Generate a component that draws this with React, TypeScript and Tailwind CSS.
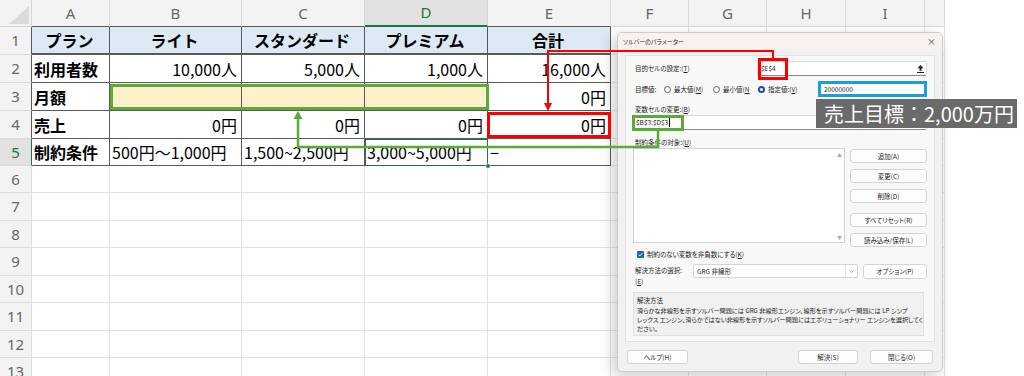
import clsx from "clsx";

const cols = [
  { name: "A", w: "w-[78px]" },
  { name: "B", w: "w-[132px]" },
  { name: "C", w: "w-[123px]" },
  { name: "D", w: "w-[123px]" },
  { name: "E", w: "w-[123px]" },
  { name: "F", w: "w-[78px]" },
  { name: "G", w: "w-[78px]" },
  { name: "H", w: "w-[79px]" },
  { name: "I", w: "w-[79px]" },
  { name: "", w: "w-[20px]" },
];

const rowHeights = [
  "h-[28px]", "h-[28px]", "h-[28px]", "h-[28px]", "h-[27px]", "h-[27px]", "h-[28px]",
  "h-[27px]", "h-[28px]", "h-[27px]", "h-[28px]", "h-[27px]", "h-[28px]",
];

type Cell = { text?: string; align?: "l" | "c" | "r"; bold?: boolean; yellow?: boolean };

const table: Cell[][] = [
  [
    { text: "プラン", align: "c", bold: true },
    { text: "ライト", align: "c", bold: true },
    { text: "スタンダード", align: "c", bold: true },
    { text: "プレミアム", align: "c", bold: true },
    { text: "合計", align: "c", bold: true },
  ],
  [
    { text: "利用者数", bold: true },
    { text: "10,000人", align: "r" },
    { text: "5,000人", align: "r" },
    { text: "1,000人", align: "r" },
    { text: "16,000人", align: "r" },
  ],
  [
    { text: "月額", bold: true },
    { yellow: true },
    { yellow: true },
    { yellow: true },
    { text: "0円", align: "r" },
  ],
  [
    { text: "売上", bold: true },
    { text: "0円", align: "r" },
    { text: "0円", align: "r" },
    { text: "0円", align: "r" },
    { text: "0円", align: "r" },
  ],
  [
    { text: "制約条件", bold: true },
    { text: "500円～1,000円" },
    { text: "1,500~2,500円" },
    { text: "3,000~5,000円" },
    { text: "−" },
  ],
];

function Sheet() {
  return (
    <div className="w-[945px] bg-white [font-family:'Noto_Sans_CJK_JP',sans-serif] text-black">
      {/* column headers */}
      <div className="flex h-[27px]">
        <div className="w-[32px] shrink-0 bg-[#f3f3f3] border-r border-b border-[#d4d4d4] flex items-end justify-end p-[2px]">
          <svg width="20" height="18" viewBox="0 0 20 18">
            <polygon points="0,18 20,18 20,0" fill="#dadada" />
          </svg>
        </div>
        {cols.map((c, i) => (
          <div
            key={i}
            className={clsx(
              c.w,
              "shrink-0 flex items-center justify-center border-r text-[15px] [font-family:'Noto_Sans',sans-serif]",
              i === 3
                ? "bg-[#e1e1e1] text-[#217346] border-b-2 border-b-[#217346] border-r-[#d4d4d4]"
                : "bg-[#f3f3f3] text-[#666] border-[#d9d9d9] border-b",
              i < 5 && i !== 3 && "border-b-[#595959]"
            )}
          >
            {c.name}
          </div>
        ))}
      </div>
      {rowHeights.map((h, r) => (
        <div key={r} className={clsx("flex", h)}>
          <div
            className={clsx(
              "w-[32px] shrink-0 flex items-center justify-center border-b border-r text-[15px] [font-family:'Noto_Sans',sans-serif]",
              r === 4 ? "bg-[#e1e1e1] text-[#217346] border-r-[#217346]" : "bg-[#f3f3f3] text-[#666]",
              r < 5 && r !== 4 ? "border-r-[#595959] border-b-[#dcdcdc]" : "border-[#dcdcdc]"
            )}
          >
            {r + 1}
          </div>
          {cols.map((c, ci) => {
            const inTable = r < 5 && ci < 5;
            const cell = inTable ? table[r][ci] : undefined;
            return (
              <div
                key={ci}
                className={clsx(
                  c.w,
                  "shrink-0 flex items-center whitespace-nowrap overflow-hidden border-r border-b text-[16px] pl-[2px] pr-[4px]",
                  inTable ? "border-[#595959]" : "border-[#e3e3e3]",
                  inTable && r === 0 && "border-b-2 bg-[#dce9f5]",
                  cell?.yellow && "bg-[#fff0cc]",
                  cell?.bold && "font-bold",
                  cell?.align === "c" && "justify-center",
                  cell?.align === "r" && "justify-end"
                )}
              >
                {cell?.text}
              </div>
            );
          })}
        </div>
      ))}
    </div>
  );
}

function RefButton() {
  return (
    <span className="w-[11px] h-[11px] flex items-center justify-center shrink-0">
      <svg width="7" height="8" viewBox="0 0 7 8">
        <path d="M3.5 0 L6.5 3.2 H4.5 V5.8 H2.5 V3.2 H0.5 Z" fill="#222" />
        <rect x="0" y="7" width="7" height="1" fill="#222" />
      </svg>
    </span>
  );
}

function Radio({ on }: { on?: boolean }) {
  return on ? (
    <span className="w-[7px] h-[7px] rounded-full bg-[#1c4e94] flex items-center justify-center shrink-0">
      <span className="w-[3px] h-[3px] rounded-full bg-white" />
    </span>
  ) : (
    <span className="w-[7px] h-[7px] rounded-full border border-[#666] bg-white shrink-0" />
  );
}

function Btn({ label, className }: { label: string; className?: string }) {
  return (
    <div
      className={clsx(
        "h-[14px] bg-[#fdfdfd] border border-[#d3d3d3] rounded-[3px] flex items-center justify-center",
        className
      )}
    >
      {label}
    </div>
  );
}

function Dialog() {
  return (
    <div className="absolute left-[617px] top-[32px] w-[326px] h-[340px] rounded-[5px] border border-[#cdcdcd] bg-[#f1f1f1] shadow-[-4px_4px_14px_rgba(0,0,0,0.2)] overflow-hidden text-[6.5px] leading-none text-[#1c1c1c] [font-family:'Noto_Sans_CJK_JP',sans-serif] [font-feature-settings:'palt']">
      <div className="h-[17px] bg-[#f8f1ed] flex items-center justify-between pl-[5px] pr-[6px]">
        <span className="text-[6px]">ソルバーのパラメーター</span>
        <span className="text-[9px] text-[#444]">×</span>
      </div>
      <div className="mx-[7px] mt-[5px] h-[287px] border border-[#e2e2e2] bg-[#f8f8f8] px-[7px] flex flex-col">
        <div className="mt-[5px] h-[15px] flex items-center">
          <span className="flex-1 pl-[2px]">目的セルの設定:(<u>T</u>)</span>
          <div className="w-[170px] h-[15px] bg-white border border-[#d8d8d8] border-b-[#8a8a8a] rounded-[2px] flex items-center pl-[3px]">
            <span className="flex-1">$E$4</span>
            <RefButton />
          </div>
        </div>
        <div className="mt-[6px] h-[14px] flex items-center">
          <span className="w-[31px] pl-[2px]">目標値:</span>
          <span className="w-[49px] flex items-center gap-[3px]">
            <Radio />
            <span>最大値(<u>M</u>)</span>
          </span>
          <span className="w-[45px] flex items-center gap-[3px]">
            <Radio />
            <span>最小値(<u>N</u></span>
          </span>
          <span className="flex-1 flex items-center gap-[3px]">
            <Radio on />
            <span>指定値:(<u>V</u>)</span>
          </span>
          <div className="w-[107px] h-[13px] bg-white border border-[#d8d8d8] border-b-[#8a8a8a] rounded-[2px] flex items-center pl-[3px]">
            20000000
          </div>
        </div>
        <div className="mt-[8px] h-[10px] flex items-center pl-[2px]">
          <span>変数セルの変更:(<u>B</u>)</span>
        </div>
        <div className="mt-[1px] h-[15px] bg-white border border-[#d8d8d8] border-b-[#8a8a8a] rounded-[2px] flex items-center pl-[2px]">
          <span className="flex-1 flex items-center">
            $B$3:$D$3<span className="ml-[1px] w-px h-[9px] bg-black" />
          </span>
          <RefButton />
        </div>
        <div className="mt-[7px] h-[10px] flex items-center pl-[2px]">
          <span>制約条件の対象:(<u>U</u>)</span>
        </div>
        <div className="mt-[1px] h-[99px] flex gap-[5px]">
          <div className="w-[212px] h-[95px] bg-white border border-[#d3d3d3] flex justify-end">
            <div className="w-[9px] flex flex-col justify-between items-center py-[3px] text-[5px] text-[#a8a8a8]">
              <span>▲</span>
              <span>▼</span>
            </div>
          </div>
          <div className="flex-1 flex flex-col pt-[1px]">
            <Btn label="追加(A)" />
            <Btn label="変更(C)" className="mt-[6px]" />
            <Btn label="削除(D)" className="mt-[6px]" />
            <Btn label="すべてリセット(R)" className="mt-[10px]" />
            <Btn label="読み込み/保存(L)" className="mt-[6px]" />
          </div>
        </div>
        <div className="mt-[2px] h-[10px] flex items-center gap-[3px] pl-[4px]">
          <span className="w-[7px] h-[7px] rounded-[1px] bg-[#2563b3] flex items-center justify-center">
            <svg width="5" height="5" viewBox="0 0 5 5">
              <path d="M0.6 2.6 L2 3.9 L4.4 1.1" stroke="white" strokeWidth="0.9" fill="none" />
            </svg>
          </span>
          <span>制約のない変数を非負数にする(<u>K</u>)</span>
        </div>
        <div className="mt-[5px] h-[21px] flex items-start">
          <div className="w-[60px] pl-[2px] pt-[3px] flex flex-col gap-[4px]">
            <span>解決方法の選択:</span>
            <span>(<u>E</u>)</span>
          </div>
          <div className="w-[165px] h-[14px] bg-white border border-[#d3d3d3] rounded-[2px] flex items-center">
            <span className="flex-1 pl-[3px]">GRG 非線形</span>
            <span className="w-[12px] h-full border-l border-[#e3e3e3] flex items-center justify-center">
              <svg width="5" height="3" viewBox="0 0 5 3">
                <path d="M0.3 0.3 L2.5 2.6 L4.7 0.3" stroke="#777" strokeWidth="0.6" fill="none" />
              </svg>
            </span>
          </div>
          <Btn label="オプション(P)" className="ml-[5px] flex-1 h-[15px]" />
        </div>
        <div className="mt-[7px] mr-[3px] h-[44px] border border-[#e0e0e0] bg-[#f0f0f0] px-[3px] pt-[4px] flex flex-col">
          <span className="h-[9px]">解決方法</span>
          <div className="mt-[2px] flex flex-col gap-[3px] whitespace-nowrap text-[6.2px]">
            <span>滑らかな非線形を示すソルバー問題には GRG 非線形エンジン、線形を示すソルバー問題には LP シンプ</span>
            <span>レックス エンジン、滑らかではない非線形を示すソルバー問題にはエボリューショナリー エンジンを選択してく</span>
            <span>ださい。</span>
          </div>
        </div>
      </div>
      <div className="mt-[8px] flex items-center px-[9px]">
        <Btn label="ヘルプ(H)" className="w-[61px] h-[13px]" />
        <span className="flex-1" />
        <Btn label="解決(S)" className="w-[60px] h-[14px] border-[#5d7ea6]" />
        <Btn label="閉じる(O)" className="ml-[12px] w-[63px] h-[14px]" />
      </div>
    </div>
  );
}

function Annotations() {
  return (
    <svg className="absolute left-0 top-0 pointer-events-none" width="1024" height="376">
      <rect x="365.5" y="139.5" width="122" height="26" fill="none" stroke="#217346" strokeWidth="1" />
      <rect x="486" y="164" width="4" height="4" fill="#217346" stroke="#fff" strokeWidth="0.6" />
      <rect x="111.5" y="85.5" width="376" height="23" fill="none" stroke="#5aab3a" strokeWidth="3" />
      <rect x="633.5" y="116.5" width="49" height="13" fill="none" stroke="#5aab3a" strokeWidth="3" />
      <polyline points="658,131 658,147 298,147 298,118" fill="none" stroke="#5aab3a" strokeWidth="2.5" />
      <polygon points="298,111 293.5,119 302.5,119" fill="#5aab3a" />
      <rect x="488.5" y="113.5" width="121" height="23" fill="none" stroke="#ff0000" strokeWidth="3" />
      <rect x="759.5" y="59.5" width="27" height="19" fill="none" stroke="#ff0000" strokeWidth="3" />
      <polyline points="773,58 773,51 548,51 548,104" fill="none" stroke="#ff0000" strokeWidth="2" />
      <polygon points="548,111 544,103 552,103" fill="#ff0000" />
      <rect x="819.5" y="82.5" width="106" height="13" fill="none" stroke="#1a9fdc" strokeWidth="3" />
    </svg>
  );
}

export default function App() {
  return (
    <div className="relative w-[1024px] h-[376px] overflow-hidden bg-white">
      <Sheet />
      <Dialog />
      <Annotations />
      <div className="absolute left-[816px] top-[99px] w-[201px] h-[29px] bg-[#6a6a6a] text-white text-[20px] leading-none flex items-center pl-[8px] [font-family:'Noto_Sans_CJK_JP',sans-serif]">
        売上目標：2,000万円
      </div>
    </div>
  );
}
